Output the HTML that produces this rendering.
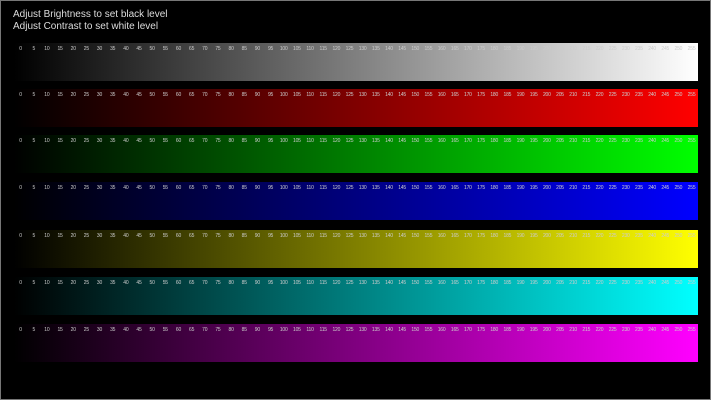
<!DOCTYPE html>
<html><head><meta charset="utf-8"><style>
html,body{margin:0;padding:0;background:#000;}
body{width:711px;height:400px;position:relative;overflow:hidden;font-family:"Liberation Sans",sans-serif;}
.frame{position:absolute;left:0;top:0;width:709px;height:398px;border:1px solid #777;}
.t{position:absolute;left:13px;color:#ddd;font-size:10px;line-height:12px;}
.bar{position:absolute;left:14px;width:684px;height:38px;}
.lab{position:absolute;left:0;top:3px;width:684px;display:flex;}
.lab span{flex:1;text-align:center;font-size:5px;color:#ccc;line-height:7px;letter-spacing:-0.2px;}
</style></head><body>
<div class="frame"></div>
<div class="t" style="top:9px">Adjust Brightness to set black level</div>
<div class="t" style="top:21px">Adjust Contrast to set white level</div>

<div class="bar" style="top:43px;background:linear-gradient(90deg,#000,#fff)"><div class="lab"><span>0</span><span>5</span><span>10</span><span>15</span><span>20</span><span>25</span><span>30</span><span>35</span><span>40</span><span>45</span><span>50</span><span>55</span><span>60</span><span>65</span><span>70</span><span>75</span><span>80</span><span>85</span><span>90</span><span>95</span><span>100</span><span>105</span><span>110</span><span>115</span><span>120</span><span>125</span><span>130</span><span>135</span><span>140</span><span>145</span><span>150</span><span>155</span><span>160</span><span>165</span><span>170</span><span>175</span><span>180</span><span>185</span><span>190</span><span>195</span><span>200</span><span>205</span><span>210</span><span>215</span><span>220</span><span>225</span><span>230</span><span>235</span><span>240</span><span>245</span><span>250</span><span>255</span></div></div>

<div class="bar" style="top:89px;background:linear-gradient(90deg,#000,#f00)"><div class="lab"><span>0</span><span>5</span><span>10</span><span>15</span><span>20</span><span>25</span><span>30</span><span>35</span><span>40</span><span>45</span><span>50</span><span>55</span><span>60</span><span>65</span><span>70</span><span>75</span><span>80</span><span>85</span><span>90</span><span>95</span><span>100</span><span>105</span><span>110</span><span>115</span><span>120</span><span>125</span><span>130</span><span>135</span><span>140</span><span>145</span><span>150</span><span>155</span><span>160</span><span>165</span><span>170</span><span>175</span><span>180</span><span>185</span><span>190</span><span>195</span><span>200</span><span>205</span><span>210</span><span>215</span><span>220</span><span>225</span><span>230</span><span>235</span><span>240</span><span>245</span><span>250</span><span>255</span></div></div>

<div class="bar" style="top:135px;background:linear-gradient(90deg,#000,#0f0)"><div class="lab"><span>0</span><span>5</span><span>10</span><span>15</span><span>20</span><span>25</span><span>30</span><span>35</span><span>40</span><span>45</span><span>50</span><span>55</span><span>60</span><span>65</span><span>70</span><span>75</span><span>80</span><span>85</span><span>90</span><span>95</span><span>100</span><span>105</span><span>110</span><span>115</span><span>120</span><span>125</span><span>130</span><span>135</span><span>140</span><span>145</span><span>150</span><span>155</span><span>160</span><span>165</span><span>170</span><span>175</span><span>180</span><span>185</span><span>190</span><span>195</span><span>200</span><span>205</span><span>210</span><span>215</span><span>220</span><span>225</span><span>230</span><span>235</span><span>240</span><span>245</span><span>250</span><span>255</span></div></div>

<div class="bar" style="top:182px;background:linear-gradient(90deg,#000,#00f)"><div class="lab"><span>0</span><span>5</span><span>10</span><span>15</span><span>20</span><span>25</span><span>30</span><span>35</span><span>40</span><span>45</span><span>50</span><span>55</span><span>60</span><span>65</span><span>70</span><span>75</span><span>80</span><span>85</span><span>90</span><span>95</span><span>100</span><span>105</span><span>110</span><span>115</span><span>120</span><span>125</span><span>130</span><span>135</span><span>140</span><span>145</span><span>150</span><span>155</span><span>160</span><span>165</span><span>170</span><span>175</span><span>180</span><span>185</span><span>190</span><span>195</span><span>200</span><span>205</span><span>210</span><span>215</span><span>220</span><span>225</span><span>230</span><span>235</span><span>240</span><span>245</span><span>250</span><span>255</span></div></div>

<div class="bar" style="top:230px;background:linear-gradient(90deg,#000,#ff0)"><div class="lab"><span>0</span><span>5</span><span>10</span><span>15</span><span>20</span><span>25</span><span>30</span><span>35</span><span>40</span><span>45</span><span>50</span><span>55</span><span>60</span><span>65</span><span>70</span><span>75</span><span>80</span><span>85</span><span>90</span><span>95</span><span>100</span><span>105</span><span>110</span><span>115</span><span>120</span><span>125</span><span>130</span><span>135</span><span>140</span><span>145</span><span>150</span><span>155</span><span>160</span><span>165</span><span>170</span><span>175</span><span>180</span><span>185</span><span>190</span><span>195</span><span>200</span><span>205</span><span>210</span><span>215</span><span>220</span><span>225</span><span>230</span><span>235</span><span>240</span><span>245</span><span>250</span><span>255</span></div></div>

<div class="bar" style="top:277px;background:linear-gradient(90deg,#000,#0ff)"><div class="lab"><span>0</span><span>5</span><span>10</span><span>15</span><span>20</span><span>25</span><span>30</span><span>35</span><span>40</span><span>45</span><span>50</span><span>55</span><span>60</span><span>65</span><span>70</span><span>75</span><span>80</span><span>85</span><span>90</span><span>95</span><span>100</span><span>105</span><span>110</span><span>115</span><span>120</span><span>125</span><span>130</span><span>135</span><span>140</span><span>145</span><span>150</span><span>155</span><span>160</span><span>165</span><span>170</span><span>175</span><span>180</span><span>185</span><span>190</span><span>195</span><span>200</span><span>205</span><span>210</span><span>215</span><span>220</span><span>225</span><span>230</span><span>235</span><span>240</span><span>245</span><span>250</span><span>255</span></div></div>

<div class="bar" style="top:324px;background:linear-gradient(90deg,#000,#f0f)"><div class="lab"><span>0</span><span>5</span><span>10</span><span>15</span><span>20</span><span>25</span><span>30</span><span>35</span><span>40</span><span>45</span><span>50</span><span>55</span><span>60</span><span>65</span><span>70</span><span>75</span><span>80</span><span>85</span><span>90</span><span>95</span><span>100</span><span>105</span><span>110</span><span>115</span><span>120</span><span>125</span><span>130</span><span>135</span><span>140</span><span>145</span><span>150</span><span>155</span><span>160</span><span>165</span><span>170</span><span>175</span><span>180</span><span>185</span><span>190</span><span>195</span><span>200</span><span>205</span><span>210</span><span>215</span><span>220</span><span>225</span><span>230</span><span>235</span><span>240</span><span>245</span><span>250</span><span>255</span></div></div>
</body></html>
